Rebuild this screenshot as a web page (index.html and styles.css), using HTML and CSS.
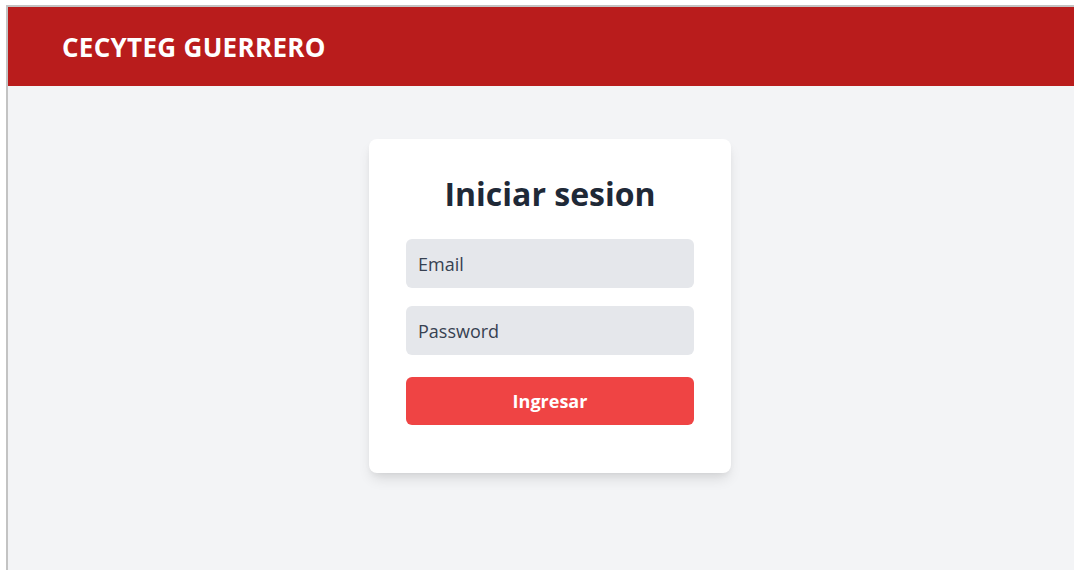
FILE: index.html
```html
<!DOCTYPE html>
<html lang="es">
<head>
<meta charset="utf-8">
<title>CECYTEG Guerrero - Iniciar sesion</title>
<link rel="stylesheet" href="styles.css">
</head>
<body>
<div class="frame">
  <header class="topbar">
    <h1 class="brand">CECYTEG GUERRERO</h1>
  </header>
  <main class="content">
    <section class="card">
      <h2 class="card-title">Iniciar sesion</h2>
      <form class="login-form">
        <input class="field" type="email" placeholder="Email">
        <input class="field" type="password" placeholder="Password">
        <button class="submit" type="button">Ingresar</button>
      </form>
    </section>
  </main>
</div>
</body>
</html>
```

FILE: styles.css
```css
* {
  box-sizing: border-box;
}

html, body {
  height: 100%;
}

body {
  margin: 0;
  background: #ffffff;
  font-family: "Open Sans", "Noto Sans", sans-serif;
  overflow: hidden;
}

.frame {
  margin: 5px 0 0 6px;
  height: calc(100% - 5px);
  border-left: 2px solid #c3c3c3;
  border-top: 2px solid #c3c3c3;
  background: #f3f4f6;
  display: flex;
  flex-direction: column;
}

.topbar {
  height: 79px;
  background: #b91c1c;
  display: flex;
  align-items: center;
  padding-left: 54px;
}

.brand {
  margin: 0;
  color: #ffffff;
  font-size: 26px;
  font-weight: 700;
  letter-spacing: 0.3px;
}

.content {
  display: flex;
  justify-content: center;
  padding: 53px 0 0 18px;
}

.card {
  width: 362px;
  background: #ffffff;
  border-radius: 8px;
  box-shadow: 0 8px 14px -3px rgba(0, 0, 0, 0.12), 0 3px 6px -2px rgba(0, 0, 0, 0.06);
  padding: 37px 37px 48px;
}

.card-title {
  margin: 0 0 27px;
  text-align: center;
  font-size: 32px;
  line-height: 36px;
  font-weight: 700;
  color: #1f2937;
}

.login-form {
  display: flex;
  flex-direction: column;
}

.field {
  height: 49px;
  border: none;
  border-radius: 6px;
  background: #e5e7eb;
  padding: 0 12px;
  font-family: inherit;
  font-size: 18px;
  color: #374151;
  outline: none;
}

.field::placeholder {
  color: #374151;
  opacity: 1;
}

.field + .field {
  margin-top: 18px;
}

.submit {
  margin-top: 22px;
  height: 48px;
  border: none;
  border-radius: 6px;
  background: #ef4444;
  color: #ffffff;
  font-family: inherit;
  font-size: 18px;
  font-weight: 700;
  cursor: pointer;
}
```
